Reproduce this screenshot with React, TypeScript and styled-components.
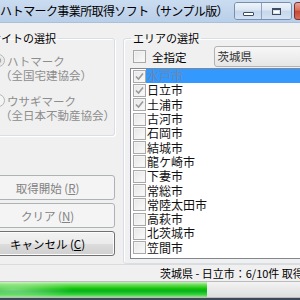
import React from 'react';
import styled, { createGlobalStyle } from 'styled-components';

const GlobalStyle = createGlobalStyle`
	html, body {
		margin: 0;
		padding: 0;
	}
	body {
		width: 300px;
		height: 300px;
		overflow: hidden;
		background: #f0f0f0;
		font-family: "Noto Sans CJK JP", "Noto Sans", sans-serif;
		font-size: 11px;
		color: #000;
	}
`;

const Viewport = styled.div`
	width: 300px;
	height: 300px;
	overflow: hidden;
`;

// the screenshot is a crop, so the window runs past the left and right edges
const Window = styled.div`
	width: 380px;
	height: 300px;
	margin-left: -20px;
	display: flex;
	flex-direction: column;
	background: #f0f0f0;
`;

const TitleBar = styled.div`
	height: 22px;
	display: flex;
	align-items: flex-start;
	padding-left: 20px;
	background: linear-gradient(#cadcf0, #b9cee8);
	border-bottom: 1px solid #a9bfdb;
`;

const Title = styled.div`
	flex: 1;
	font-size: 12px;
	line-height: 22px;
	letter-spacing: -0.6px;
	white-space: nowrap;
`;

const Controls = styled.div`
	display: flex;
	margin-top: 2px;
	margin-right: 21px;
	gap: 2px;
`;

const MinMax = styled.div`
	display: flex;
	height: 16px;
	border: 1px solid #7890ad;
	border-radius: 3px;
	overflow: hidden;
`;

const CaptionButton = styled.div<{ $w: number }>`
	width: ${({ $w }) => $w}px;
	display: flex;
	align-items: center;
	justify-content: center;
	background: linear-gradient(#eef3fa 0%, #dbe6f3 45%, #c6d7ec 50%, #d3e1f2 100%);
	& + & {
		border-left: 1px solid #8fa3bd;
	}
`;

const CloseButton = styled.div`
	width: 43px;
	height: 16px;
	border: 1px solid #7a3030;
	border-radius: 3px;
	background: linear-gradient(#e8a597 0%, #d8705e 45%, #c74632 50%, #d2705a 100%);
`;

const MinGlyph = styled.div`
	width: 9px;
	height: 2px;
	margin-top: 6px;
	background: #fff;
	border: 1px solid #3c4c62;
	border-radius: 1px;
`;

const MaxGlyph = styled.div`
	width: 7px;
	height: 4px;
	border: 1px solid #3c4c62;
	border-top-width: 2px;
	background: #fff;
	box-shadow: inset 0 0 0 1px #d8e2ee;
`;

const Main = styled.div`
	display: flex;
	gap: 8px;
	padding: 8px 10px 0 0;
`;

const LeftColumn = styled.div`
	width: 135px;
	display: flex;
	flex-direction: column;
`;

const Group = styled.fieldset`
	margin: 0;
	padding: 0;
	min-width: 0;
	border: 1px solid #d5dfe5;
	border-radius: 3px;
	box-shadow: inset 1px 1px 0 #fff, 1px 1px 0 #fff;
`;

const Legend = styled.legend`
	margin-left: 7px;
	padding: 0 2px;
	line-height: 14px;
	font-size: 11px;
`;

const SiteBody = styled.div`
	padding: 8px 0 12px 11px;
	font-size: 11.5px;
	color: #8d8d8d;
`;

const RadioRow = styled.div<{ $gap?: number }>`
	display: flex;
	align-items: center;
	height: 15px;
	gap: 2px;
	margin-top: ${({ $gap }) => $gap ?? 0}px;
`;

const Radio = styled.div<{ $on?: boolean }>`
	box-sizing: border-box;
	width: 13px;
	height: 13px;
	border-radius: 50%;
	border: 1px solid #b5b5b5;
	background: radial-gradient(circle, ${({ $on }) => ($on ? '#a8a8a8 0 2.5px, #e6e6e6 3px' : '#f4f4f4 0')}, #f4f4f4 100%);
`;

const SubLabel = styled.div`
	height: 15px;
	line-height: 15px;
	padding-left: 8px;
	white-space: nowrap;
`;

const ButtonStack = styled.div`
	display: flex;
	flex-direction: column;
	gap: 3px;
	margin-top: 39px;
`;

const PushButton = styled.button`
	height: 25px;
	width: 100%;
	padding: 0;
	font-family: inherit;
	font-size: 11.5px;
	color: #000;
	border: 1px solid #707070;
	border-radius: 3px;
	background: linear-gradient(#f2f2f2 0%, #ebebeb 50%, #dddddd 50%, #cfcfcf 100%);
	box-shadow: inset 0 0 0 1px #fcfcfc;
	&:disabled {
		color: #838383;
		border-color: #adb2b5;
		background: #f4f4f4;
		box-shadow: none;
	}
`;

const Key = styled.span`
	text-decoration: underline;
`;

const RightGroup = styled(Group)`
	flex: 1;
`;

const AreaBody = styled.div`
	padding: 1px 0 4px 6px;
	display: flex;
	flex-direction: column;
	gap: 1px;
`;

const TopRow = styled.div`
	display: flex;
	align-items: center;
	height: 21px;
	padding-left: 3px;
	font-size: 11.5px;
`;

const AllLabel = styled.span`
	margin-left: 6px;
	line-height: 14px;
`;

const Combo = styled.div`
	flex: 1;
	height: 21px;
	box-sizing: border-box;
	margin-left: 27px;
	padding-left: 3px;
	line-height: 19px;
	color: #333;
	border: 1px solid #b2b2b2;
	border-radius: 3px;
	background: linear-gradient(#f7f7f7, #e6e6e6);
`;

const ListBox = styled.div`
	height: 191px;
	box-sizing: border-box;
	display: flex;
	border: 1px solid #828790;
	background: #fff;
`;

const Items = styled.div`
	flex: 1;
	display: flex;
	flex-direction: column;
`;

const Item = styled.div`
	height: 14.3px;
	display: flex;
	align-items: center;
	padding-left: 2px;
	font-size: 12px;
`;

const ItemText = styled.div<{ $selected?: boolean }>`
	flex: 1;
	align-self: stretch;
	display: flex;
	align-items: center;
	padding-left: 1px;
	line-height: 14px;
	color: ${({ $selected }) => ($selected ? '#6a87ad' : '#111')};
	background: ${({ $selected }) => ($selected ? '#3399ff' : 'transparent')};
`;

const Box = styled.div`
	box-sizing: border-box;
	width: 13px;
	height: 13px;
	flex: none;
	border: 1px solid #a9a9a9;
	background: linear-gradient(135deg, #e6e6e6, #fbfbfb);
	box-shadow: inset 0 0 0 1px #f4f4f4;
	display: flex;
	align-items: center;
	justify-content: center;
`;

const ScrollBar = styled.div`
	width: 17px;
	display: flex;
	flex-direction: column;
	background: #eaeaea;
	border-left: 1px solid #e2e2e2;
`;

const ArrowButton = styled.div`
	height: 17px;
	display: flex;
	align-items: center;
	justify-content: center;
`;

const Thumb = styled.div`
	height: 43px;
	margin: 1px 1px 0;
	border: 1px solid #979797;
	border-radius: 2px;
	background: linear-gradient(90deg, #f1f1f1, #dcdcdc);
	display: flex;
	align-items: center;
	justify-content: center;
`;

const Grip = styled.div`
	width: 7px;
	height: 5px;
	background: repeating-linear-gradient(#666 0 1px, transparent 1px 2px);
`;

const Track = styled.div`
	flex: 1;
`;

const StatusBar = styled.div`
	height: 16px;
	padding-left: 180px;
	line-height: 16px;
	font-size: 11px;
	white-space: nowrap;
	overflow: hidden;
	border-top: 1px solid #dcdcdc;
`;

const Progress = styled.div`
	height: 17px;
	margin: 0 2px;
	box-sizing: border-box;
	border: 1px solid #bcbcbc;
	background: linear-gradient(#f3f3f3, #dedede);
`;

const ProgressFill = styled.div`
	height: 100%;
	background:
		radial-gradient(ellipse 60px 10px at 30px 50%, rgba(255, 255, 255, 0.45), transparent),
		linear-gradient(#c4f4b8 0%, #6fdc5f 18%, #10c400 45%, #06b025 60%, #3bd43a 85%, #8fe688 100%);
`;

const BottomEdge = styled.div`
	flex: 1;
	background: #3c4757;
`;

const Check: React.FC<{ on: boolean }> = ({ on }) => (
	<Box>
		{on && (
			<svg width="9" height="9" viewBox="0 0 9 9">
				<path d="M1 4.5 L3.5 7 L8 1.5" fill="none" stroke="#9a9a9a" strokeWidth="1.6" />
			</svg>
		)}
	</Box>
);

const cities = [
	'水戸市',
	'日立市',
	'土浦市',
	'古河市',
	'石岡市',
	'結城市',
	'龍ケ崎市',
	'下妻市',
	'常総市',
	'常陸太田市',
	'高萩市',
	'北茨城市',
	'笠間市',
];

const checkedCount = 3;
const done = 6;
const total = 10;

const App: React.FC = () => {
	return (
		<Viewport>
			<GlobalStyle />
			<Window>
				<TitleBar>
					<Title>ハトマーク事業所取得ソフト（サンプル版）</Title>
					<Controls>
						<MinMax>
							<CaptionButton $w={26}>
								<MinGlyph />
							</CaptionButton>
							<CaptionButton $w={29}>
								<MaxGlyph />
							</CaptionButton>
						</MinMax>
						<CloseButton />
					</Controls>
				</TitleBar>
				<Main>
					<LeftColumn>
						<Group>
							<Legend>サイトの選択</Legend>
							<SiteBody>
								<RadioRow>
									<Radio $on />
									<span>ハトマーク</span>
								</RadioRow>
								<SubLabel>（全国宅建協会）</SubLabel>
								<RadioRow $gap={10}>
									<Radio />
									<span>ウサギマーク</span>
								</RadioRow>
								<SubLabel>（全日本不動産協会）</SubLabel>
							</SiteBody>
						</Group>
						<ButtonStack>
							<PushButton disabled>
								取得開始 (<Key>R</Key>)
							</PushButton>
							<PushButton disabled>
								クリア (<Key>N</Key>)
							</PushButton>
							<PushButton>
								キャンセル (<Key>C</Key>)
							</PushButton>
						</ButtonStack>
					</LeftColumn>
					<RightGroup>
						<Legend>エリアの選択</Legend>
						<AreaBody>
							<TopRow>
								<Check on={false} />
								<AllLabel>全指定</AllLabel>
								<Combo>茨城県</Combo>
							</TopRow>
							<ListBox>
								<Items>
									{cities.map((city, i) => (
										<Item key={city}>
											<Check on={i < checkedCount} />
											<ItemText $selected={i === 0}>{city}</ItemText>
										</Item>
									))}
								</Items>
								<ScrollBar>
									<ArrowButton>
										<svg width="7" height="4" viewBox="0 0 7 4">
											<path d="M0 4 L3.5 0 L7 4 Z" fill="#222" />
										</svg>
									</ArrowButton>
									<Thumb>
										<Grip />
									</Thumb>
									<Track />
									<ArrowButton>
										<svg width="7" height="4" viewBox="0 0 7 4">
											<path d="M0 0 L3.5 4 L7 0 Z" fill="#222" />
										</svg>
									</ArrowButton>
								</ScrollBar>
							</ListBox>
						</AreaBody>
					</RightGroup>
				</Main>
				<StatusBar>茨城県 - 日立市：6/10件 取得中</StatusBar>
				<Progress>
					<ProgressFill style={{ width: `${(done / total) * 100}%` }} />
				</Progress>
				<BottomEdge />
			</Window>
		</Viewport>
	);
};

export default App;
